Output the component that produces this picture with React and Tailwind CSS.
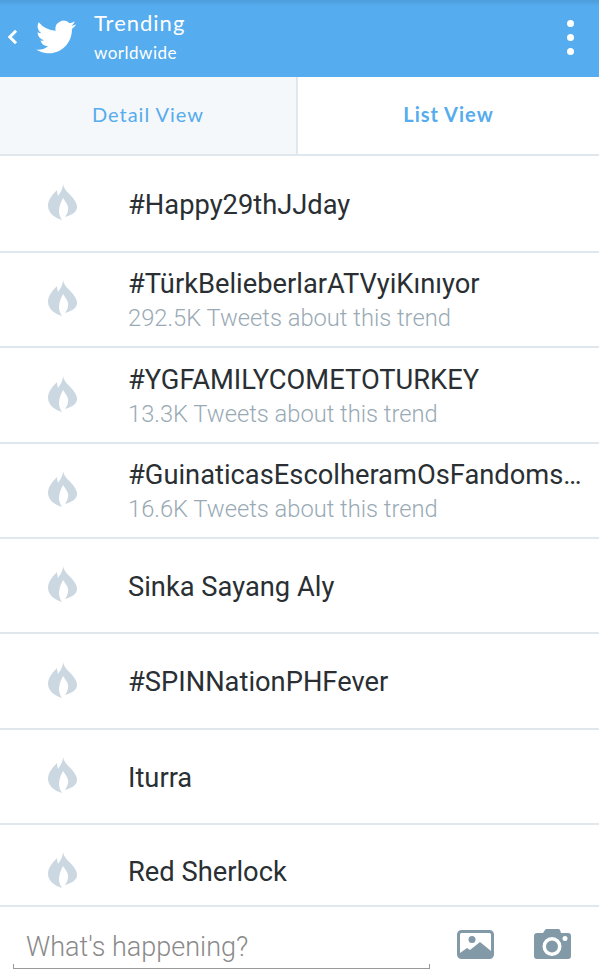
import React from 'react';

const trends = [
  { name: '#Happy29thJJday', h: 'h-[97px]' },
  { name: '#TürkBelieberlarATVyiKınıyor', sub: '292.5K Tweets about this trend', h: 'h-[95px]' },
  { name: '#YGFAMILYCOMETOTURKEY', sub: '13.3K Tweets about this trend', h: 'h-[96px]' },
  { name: '#GuinaticasEscolheramOsFandoms…', sub: '16.6K Tweets about this trend', h: 'h-[95px]' },
  { name: 'Sinka Sayang Aly', h: 'h-[95px]' },
  { name: '#SPINNationPHFever', h: 'h-[96px]' },
  { name: 'Iturra', h: 'h-[95px]' },
];

function Flame() {
  return (
    <svg viewBox="0 0 30 38" className="w-[30px] h-[38px] shrink-0 ml-[47px] mb-[3px]">
      <path
        fill="#ccd8e1"
        d="M16 1C17 7 22 10 26 15C29 19 30 21 30 24C30 29 25 32 18 34C21 30 21.500 26 21 24C20.500 21 18 18 16 15C14 19 12 23 12 28C12 31 13 34 15 37C8 35 1 30 1 23C1 17 5 12 10 7C10 9 10.500 11 11 13C13 10 16 6 16 1Z"
      />
    </svg>
  );
}

function Bird() {
  return (
    <svg viewBox="0 0 24 24" className="w-[40px] h-[40px] ml-[18px]" fill="#fff">
      <path d="M23.95 4.57a10 10 0 0 1-2.82.77 4.96 4.96 0 0 0 2.16-2.72 9.9 9.9 0 0 1-3.12 1.18 4.92 4.92 0 0 0-8.38 4.48A13.94 13.94 0 0 1 1.64 3.16a4.93 4.93 0 0 0 1.52 6.57 4.9 4.9 0 0 1-2.23-.61v.06a4.92 4.92 0 0 0 3.95 4.83 5 5 0 0 1-2.21.08 4.94 4.94 0 0 0 4.6 3.42A9.87 9.87 0 0 1 0 19.54a13.94 13.94 0 0 0 7.55 2.21c9.05 0 14-7.5 14-13.98 0-.21 0-.42-.02-.63a9.94 9.94 0 0 0 2.46-2.55z" />
    </svg>
  );
}

function TrendRow({ name, sub, h }) {
  return (
    <div className={`flex items-center ${h} border-b-2 border-[#e1e8ed]`}>
      <Flame />
      <div className="ml-[51px] min-w-0 pt-[2px]">
        <div className="text-[27.3px] leading-[32px] text-[#292f33] font-['Roboto',sans-serif] whitespace-nowrap">{name}</div>
        {sub && <div className="mt-[3px] text-[23.7px] leading-[30px] font-light text-[#99aab5] font-['Roboto',sans-serif] whitespace-nowrap">{sub}</div>}
      </div>
    </div>
  );
}

export default function App() {
  return (
    <div className="w-[599px] h-[978px] bg-white overflow-hidden flex flex-col">
      <header className="h-[77px] bg-[linear-gradient(#4d9ddb_0,#55acee_6px)] flex items-center shrink-0">
        <svg viewBox="0 0 12 18" className="w-[11px] h-[16px] ml-[7px] mb-[3px]" fill="none" stroke="#fff" strokeWidth="3.4">
          <path d="M10 2 3 9l7 7" />
        </svg>
        <div className="mb-[3px]">
          <Bird />
        </div>
        <div className="ml-[18px] text-white font-['Lato',sans-serif]">
          <div className="text-[22px] leading-[26px] tracking-[1px] -mt-[3px]">Trending</div>
          <div className="text-[17px] leading-[24px] mt-[5px] tracking-[0.5px]">worldwide</div>
        </div>
        <div className="ml-auto mr-[25px] mb-[3px] flex flex-col gap-[7px]">
          <span className="w-[7px] h-[7px] rounded-full bg-white" />
          <span className="w-[7px] h-[7px] rounded-full bg-white" />
          <span className="w-[7px] h-[7px] rounded-full bg-white" />
        </div>
      </header>

      <div className="flex h-[79px] shrink-0 border-b-2 border-[#e1e8ed] font-['Lato',sans-serif] text-[#55acee] text-[20px] tracking-[1px]">
        <div className="w-[298px] bg-[#f5f8fa] border-r-2 border-[#e1e8ed] flex items-center justify-center pb-[3px]">Detail View</div>
        <div className="flex-1 flex items-center justify-center font-bold pb-[3px]">List View</div>
      </div>

      {trends.map((t) => (
        <TrendRow key={t.name} {...t} />
      ))}
      <div className="flex items-center h-[82px] pt-[13px] border-b-2 border-[#e1e8ed] shrink-0">
        <Flame />
        <div className="ml-[51px] text-[27.3px] leading-[32px] text-[#292f33] font-['Roboto',sans-serif]">Red Sherlock</div>
      </div>

      <div className="flex items-start flex-1">
        <div className="ml-[13px] mt-[23px] w-[417px] h-[39px] relative border-b border-[#999]">
          <span className="absolute left-0 bottom-0 w-px h-[4px] bg-[#999]" />
          <span className="absolute right-0 bottom-0 w-px h-[4px] bg-[#999]" />
          <div className="pl-[13px] text-[27px] leading-[34px] text-[#8a8a8a] font-light font-['Roboto',sans-serif]">What's happening?</div>
        </div>
        <svg viewBox="0 0 37 29" className="w-[37px] h-[29px] ml-[27px] mt-[23px]">
          <rect x="1.5" y="1.5" width="34" height="26" rx="3" fill="#fff" stroke="#8299a8" strokeWidth="3" />
          <circle cx="15" cy="9.5" r="3.5" fill="#8299a8" />
          <path d="M3 23l7-5 3 2 10-8 11 9v6H3z" fill="#8299a8" />
        </svg>
        <svg viewBox="0 0 37 30" className="w-[37px] h-[30px] ml-[40px] mt-[22px]">
          <path fill="#8299a8" fillRule="evenodd" d="M3 4h6l2-3c.5-.7 1-1 2-1h11c1 0 1.500.3 2 1l1 3h7c2 0 3 1 3 3v20c0 2-1 3-3 3H3c-2 0-3-1-3-3V7c0-2 1-3 3-3zm15 4a9.500 9.500 0 1 0 0 19 9.500 9.500 0 0 0 0-19zm0 3.500a6 6 0 1 1 0 12 6 6 0 0 1 0-12zM31 7a2.500 2.500 0 1 0 0 5 2.500 2.500 0 0 0 0-5z" />
        </svg>
      </div>
    </div>
  );
}
